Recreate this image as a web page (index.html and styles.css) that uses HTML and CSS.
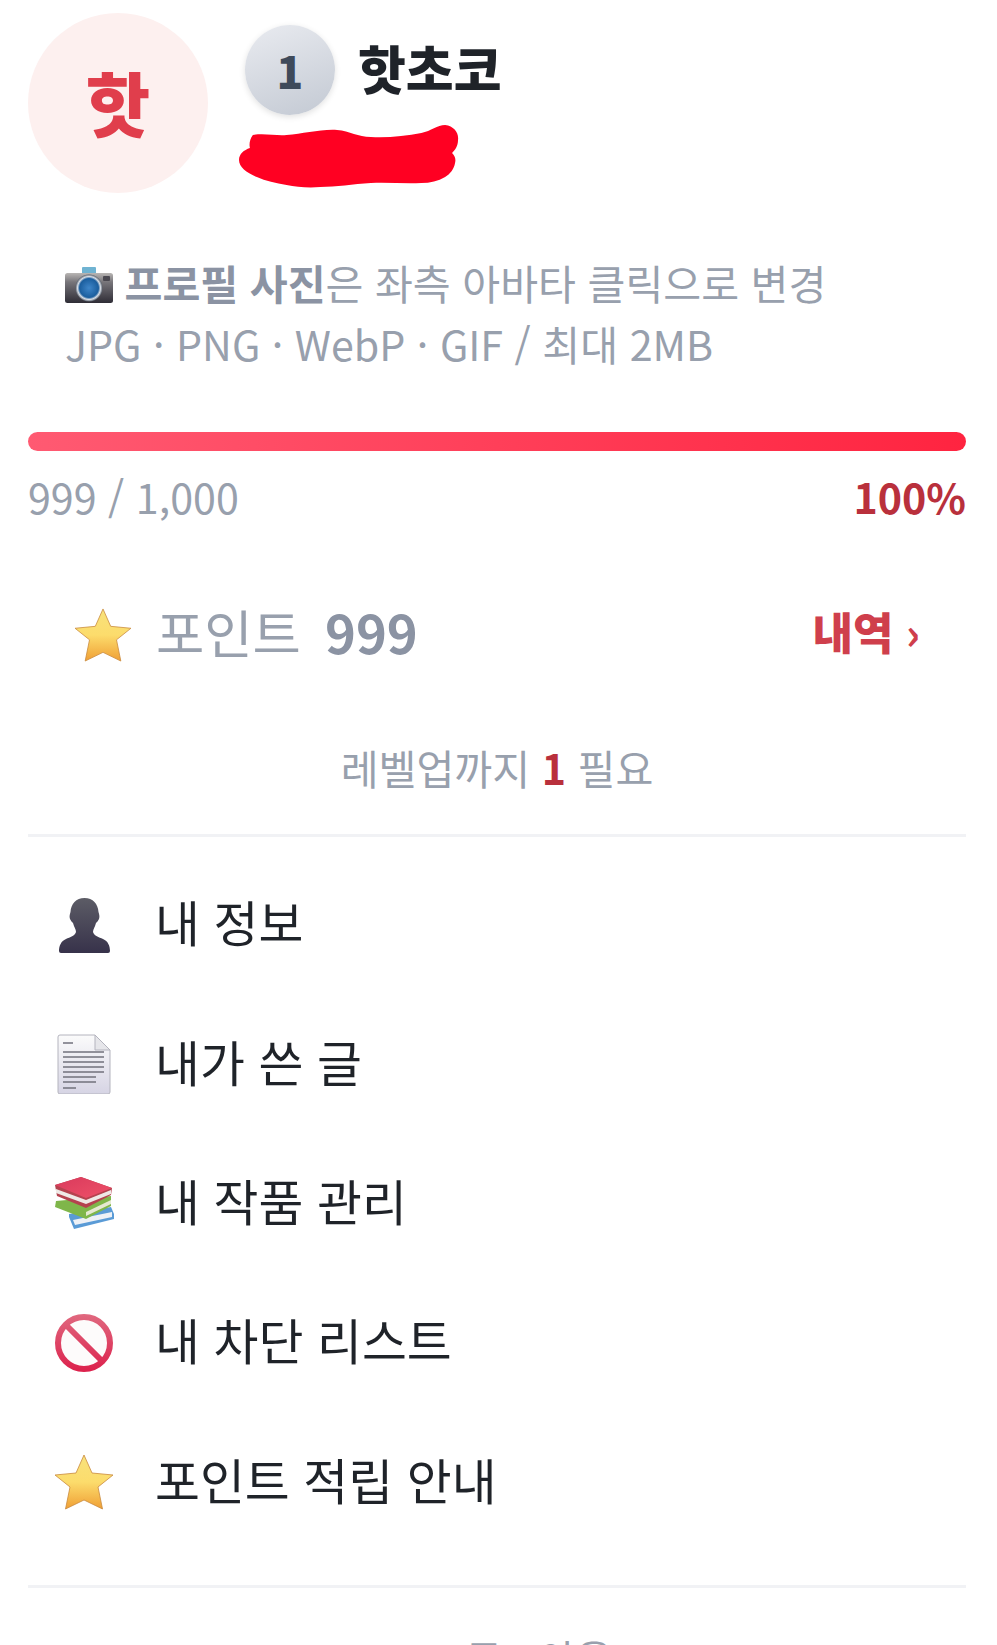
FILE: index.html
```html
<!DOCTYPE html>
<html lang="ko">
<head>
<meta charset="UTF-8">
<meta name="viewport" content="width=device-width, initial-scale=1.0">
<title>내 프로필</title>
<link rel="stylesheet" href="styles.css">
</head>
<body>
    <div class="panel">
        <!-- 프로필 상단 -->
        <div class="profile">
            <div class="avatar">핫</div>
            <div class="who">
                <div class="name-row">
                    <span class="level">1</span>
                    <span class="name">핫초코</span>
                </div>
                <svg class="scribble" viewBox="0 0 222 63" preserveAspectRatio="none" aria-hidden="true">
                    <path d="M14 10 C25 8 38 11 48 10 C65 9 82 4 99 5 C112 6 120 12 133 12 C150 13 168 11 184 8 C194 6 200 0 208 0 C217 1 222 8 221 15 C221 21 218 25 215 28 C218 31 219 34 218 38 C217 44 213 49 208 52 C201 56 193 58 184 58 C167 59 150 57 133 58 C115 59 98 62 82 62 C70 63 58 62 48 60 C37 58 27 56 18 52 C8 48 0 42 0 35 C0 29 5 25 11 23 C10 19 11 14 14 10 Z"/>
                </svg>
            </div>
        </div>

        <div class="photo-hint">
            <p>
                <svg class="emoji-cam" viewBox="0 0 48 36" aria-hidden="true">
                    <defs>
                        <linearGradient id="camBody" x1="0" y1="0" x2="0" y2="1">
                            <stop offset="0" stop-color="#b9b6b4"/>
                            <stop offset="0.3" stop-color="#77757a"/>
                            <stop offset="1" stop-color="#2f2d36"/>
                        </linearGradient>
                        <radialGradient id="camLens" cx="0.5" cy="0.5" r="0.5">
                            <stop offset="0" stop-color="#3f86c9"/>
                            <stop offset="0.7" stop-color="#1b5e9e"/>
                            <stop offset="0.85" stop-color="#d8dee6"/>
                            <stop offset="1" stop-color="#59616d"/>
                        </radialGradient>
                    </defs>
                    <rect x="17" y="0" width="14" height="7" rx="1" fill="#6fb3d2"/>
                    <rect x="0" y="6" width="48" height="30" rx="2.5" fill="url(#camBody)"/>
                    <circle cx="24" cy="21" r="13.5" fill="url(#camLens)"/>
                    <rect x="38" y="9" width="7" height="5" rx="1" fill="#4a4850"/>
                </svg>
                <b>프로필 사진</b>은 좌측 아바타 클릭으로 변경
            </p>
            <p>JPG · PNG · WebP · GIF / 최대 2MB</p>
        </div>

        <!-- 경험치 -->
        <div class="progress"><div class="progress-fill"></div></div>
        <div class="progress-text">
            <span>999 / 1,000</span>
            <span class="percent">100%</span>
        </div>

        <div class="points">
            <div class="points-left">
                <svg class="emoji-star" viewBox="0 0 60 56" aria-hidden="true"><use href="#star"/></svg>
                <span>포인트</span>
                <b>999</b>
            </div>
            <a class="history" href="#">내역 <span class="chev">›</span></a>
        </div>

        <p class="levelup">레벨업까지 <b>1</b> 필요</p>

        <!-- 메뉴 -->
        <ul class="menu">
            <li>
                <svg class="menu-icon" viewBox="0 0 60 60" aria-hidden="true">
                    <defs>
                        <linearGradient id="person" x1="0" y1="0" x2="0" y2="1">
                            <stop offset="0" stop-color="#5c5c66"/>
                            <stop offset="1" stop-color="#37324a"/>
                        </linearGradient>
                    </defs>
                    <path fill="url(#person)" d="M30.5 3 C39 3 44 9 44.5 17 C45 19 46 21 45 24 C44 26 43 27 42 28 C41 32 39 34 39 37 C40 41 45 42 49 44 C54 46 56 51 56 56 Q56 58 54 58 L7 58 Q5 58 5 56 C5 51 7 46 12 44 C16 42 21 41 22 37 C22 34 20 32 19 28 C18 27 17 26 16 24 C15 21 16 19 16.5 17 C17 9 22 3 30.5 3 Z"/>
                </svg>
                <span>내 정보</span>
            </li>
            <li>
                <svg class="menu-icon" viewBox="0 0 60 60" aria-hidden="true">
                    <defs>
                        <linearGradient id="paper" x1="0" y1="0" x2="0" y2="1">
                            <stop offset="0" stop-color="#fbfbfb"/>
                            <stop offset="1" stop-color="#d6d4e4"/>
                        </linearGradient>
                    </defs>
                    <path d="M6 1 H41 L56 16 V58 Q56 60 54 60 H6 Q4 60 4 58 V3 Q4 1 6 1 Z" fill="url(#paper)" stroke="#b4b4be"/>
                    <path d="M41 1 V16 H56 Z" fill="#e6e6ea" stroke="#b4b4be"/>
                    <path d="M9 9 H19 M9 18 H50 M9 23 H50 M9 28 H50 M9 33 H50 M9 38 H50 M9 43 H42 M9 48 H42 M9 54 H22" stroke="#72727c" stroke-width="1.3"/>
                </svg>
                <span>내가 쓴 글</span>
            </li>
            <li>
                <svg class="menu-icon" viewBox="0 0 60 54" aria-hidden="true">
                    <defs>
                        <linearGradient id="bookRed" x1="0" y1="0" x2="1" y2="1">
                            <stop offset="0" stop-color="#d93a5c"/>
                            <stop offset="1" stop-color="#ee5068"/>
                        </linearGradient>
                    </defs>
                    <!-- 파란 책 -->
                    <path d="M15 38 L57 31 L60 38 L60 43 L20 53 L15 41 Z" fill="#5a9bd6"/>
                    <path d="M19 44 L58 36 L58 41 L21 49 Z" fill="#eef1f6"/>
                    <!-- 초록 책 -->
                    <path d="M2 25 L57 20 L57 30 L32 43 L1 31 Z" fill="#7fb64a"/>
                    <path d="M32 36 L57 24 L57 28 L32 40 Z" fill="#e6e9d2"/>
                    <!-- 빨간 책 -->
                    <path d="M1 9 L27 1 L58 12 L57 19 L32 32 L3 20 Z" fill="#b5424f"/>
                    <path d="M2 13 L32 24 L57 14 L57 18 L32 28 L2 17 Z" fill="#efe9e6"/>
                    <path d="M1 9 L27 1 L58 12 L32 22 Z" fill="url(#bookRed)"/>
                </svg>
                <span>내 작품 관리</span>
            </li>
            <li>
                <svg class="menu-icon" viewBox="0 0 60 60" aria-hidden="true">
                    <defs>
                        <linearGradient id="noEntry" gradientUnits="userSpaceOnUse" x1="0" y1="0" x2="0" y2="60">
                            <stop offset="0" stop-color="#e06a80"/>
                            <stop offset="1" stop-color="#dc1f4b"/>
                        </linearGradient>
                    </defs>
                    <circle cx="30" cy="30" r="26" fill="#fdfbfb" stroke="url(#noEntry)" stroke-width="6"/>
                    <path d="M12 12 L48 48" stroke="url(#noEntry)" stroke-width="6"/>
                </svg>
                <span>내 차단 리스트</span>
            </li>
            <li>
                <svg class="menu-icon" viewBox="0 0 60 56" aria-hidden="true">
                    <defs>
                        <linearGradient id="starFill" x1="0" y1="0" x2="0" y2="1">
                            <stop offset="0" stop-color="#f8e27c"/>
                            <stop offset="0.5" stop-color="#fcdc6c"/>
                            <stop offset="1" stop-color="#ef9f35"/>
                        </linearGradient>
                    </defs>
                    <path id="star" fill="url(#starFill)" stroke="#c9893c" stroke-width="0.8" d="M30 1 L38 19 L59 21 L44 33 L48.5 55 L30 46 L11.5 55 L16 33 L1 21 L22 19 Z"/>
                </svg>
                <span>포인트 적립 안내</span>
            </li>
        </ul>

        <div class="logout">로그아웃</div>
    </div>
</body>
</html>
```

FILE: styles.css
```css
/* 기본 */
html, body {
    margin: 0;
    padding: 0;
    height: 1645px;
    overflow: hidden;
    background: #fff;
}
body {
    font-family: "Noto Sans CJK KR", "Noto Sans", sans-serif;
    color: #1f2329;
}
p {
    margin: 0;
}
.panel {
    padding: 13px 31px 0 28px;
}

/* 프로필 */
.profile {
    display: flex;
    gap: 37px;
}
.avatar {
    width: 180px;
    height: 180px;
    padding-bottom: 4px;
    box-sizing: border-box;
    border-radius: 50%;
    background: #fdf0ef;
    color: #e03e4c;
    font-size: 70px;
    font-weight: 900;
    display: flex;
    align-items: center;
    justify-content: center;
}
.who {
    padding-top: 12px;
}
.name-row {
    display: flex;
    align-items: center;
    gap: 23px;
}
.level {
    width: 90px;
    height: 90px;
    border-radius: 50%;
    background: linear-gradient(160deg, #e9ebf0, #c3c9d3);
    box-shadow: 0 2px 6px rgba(0, 0, 0, 0.12);
    color: #3f4a5a;
    font-size: 44px;
    font-weight: 900;
    display: flex;
    align-items: center;
    justify-content: center;
}
.name {
    font-size: 52px;
    font-weight: 900;
    line-height: 1;
    position: relative;
    top: -2px;
}
.scribble {
    display: block;
    width: 220px;
    height: 63px;
    margin: 10px 0 0 -6px;
    fill: #ff0022;
}

/* 사진 안내 */
.photo-hint {
    margin: 59px 0 0 37px;
    font-size: 41.2px;
    line-height: 60.5px;
    color: #98a0ad;
}
.photo-hint p {
    white-space: nowrap;
}
.photo-hint b {
    color: #8b93a3;
}
.emoji-cam {
    width: 48px;
    height: 36px;
    vertical-align: -3px;
}

/* 경험치 */
.progress {
    margin-top: 59px;
    height: 19px;
    border-radius: 10px;
    overflow: hidden;
    background: #f1f2f5;
}
.progress-fill {
    height: 100%;
    background: linear-gradient(90deg, #ff5a72, #ff2440);
}
.progress-text {
    display: flex;
    justify-content: space-between;
    margin-top: 16px;
    font-size: 41.2px;
    line-height: 58px;
    color: #98a0ad;
}
.percent {
    color: #b9303c;
    font-weight: 700;
}

/* 포인트 */
.points {
    display: flex;
    align-items: center;
    justify-content: space-between;
    margin-top: 76px;
    padding: 0 46px;
    height: 60px;
}
.points-left {
    display: flex;
    align-items: center;
    gap: 24px;
    font-size: 52.5px;
    color: #98a0ad;
}
.points-left b {
    color: #8b93a3;
    font-weight: 700;
}
.emoji-star {
    width: 58px;
    height: 54px;
    position: relative;
    top: 4px;
}
.history {
    color: #cf3f4c;
    font-size: 44px;
    font-weight: 900;
    text-decoration: none;
}
.chev {
    font-weight: 700;
}
.levelup {
    margin-top: 76px;
    text-align: center;
    font-size: 41.2px;
    line-height: 60px;
    color: #98a0ad;
}
.levelup b {
    color: #b9303c;
}

/* 메뉴 */
.menu {
    list-style: none;
    margin: 37px 0 0;
    padding: 14px 0 37px;
    border-top: 3px solid #f1f2f5;
    border-bottom: 3px solid #f1f2f5;
}
.menu li {
    display: flex;
    align-items: center;
    height: 139.4px;
    font-size: 48.8px;
    color: #1f2329;
}
.menu-icon {
    width: 60px;
    margin: 8px 41px 0 26px;
    flex-shrink: 0;
}
.logout {
    margin-top: 40px;
    padding-left: 84px;
    text-align: center;
    font-size: 40px;
    color: #98a0ad;
}
```
